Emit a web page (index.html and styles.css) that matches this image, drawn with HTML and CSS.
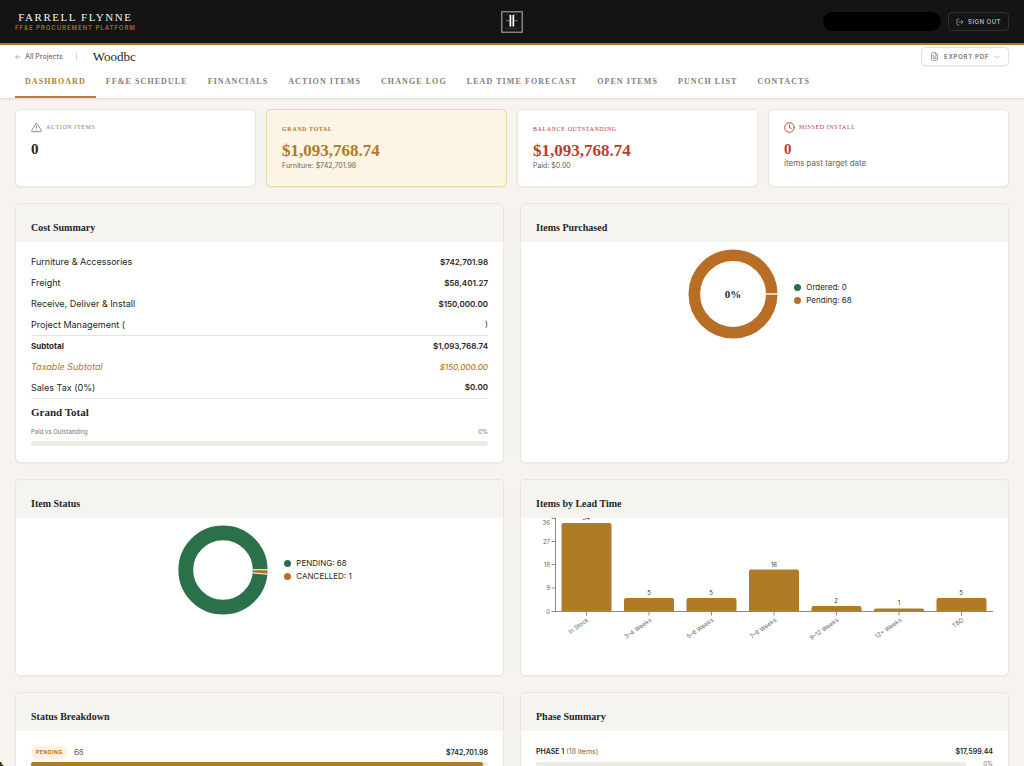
FILE: index.html
```html
<!DOCTYPE html>
<html lang="en">
<head>
<meta charset="utf-8">
<meta name="viewport" content="width=device-width, initial-scale=1">
<title>Farrell Flynne – FF&amp;E Procurement Platform</title>
<link rel="stylesheet" href="styles.css">
</head>
<body>
<header class="topbar">
  <div class="brand">
    <span class="brand-name">FARRELL FLYNNE</span>
    <span class="brand-sub">FF&amp;E PROCUREMENT PLATFORM</span>
  </div>
  <svg class="logo" viewBox="0 0 22 22" aria-label="Farrell Flynne logo" role="img">
    <rect x="0.75" y="0.75" width="20.5" height="20.5" fill="#141414" stroke="#8a8a8a" stroke-width="1.4"/>
    <path d="M5 3.6h12M4 17.8h14" stroke="#333" stroke-width="1"/>
    <path d="M5 9.7h12" stroke="#777" stroke-width="1"/>
    <rect x="8.500" y="4" width="5" height="11.5" fill="#555"/>
    <path d="M9.3 4v11.5M12.4 4v11.5" stroke="#fff" stroke-width="1.4"/>
  </svg>
  <div class="account">
    <span class="user-pill"></span>
    <button class="signout" type="button">
      <svg class="icon-xs" viewBox="0 0 24 24"><path d="M9 21H5a2 2 0 0 1-2-2V5a2 2 0 0 1 2-2h4M16 17l5-5-5-5M21 12H9"/></svg>
      SIGN OUT
    </button>
  </div>
</header>

<div class="subbar">
  <div class="crumbs">
    <a class="back" href="#"><svg class="icon-xxs" viewBox="0 0 24 24"><path d="M21 12H3M11 4l-8 8 8 8"/></svg>All Projects</a>
    <span class="divider"></span>
    <h1 class="project">Woodbc</h1>
    <button class="export" type="button">
      <svg class="icon-sm" viewBox="0 0 24 24"><path d="M14 2H6a2 2 0 0 0-2 2v16a2 2 0 0 0 2 2h12a2 2 0 0 0 2-2V8zM14 2v6h6M16 13H8M16 17H8M10 9H8"/></svg>
      EXPORT PDF
      <svg class="icon-xxs" viewBox="0 0 24 24"><path d="M3 8l9 9 9-9"/></svg>
    </button>
  </div>
  <nav class="tabs">
    <a class="tab active" href="#">DASHBOARD</a>
    <a class="tab" href="#">FF&amp;E SCHEDULE</a>
    <a class="tab" href="#">FINANCIALS</a>
    <a class="tab" href="#">ACTION ITEMS</a>
    <a class="tab" href="#">CHANGE LOG</a>
    <a class="tab" href="#">LEAD TIME FORECAST</a>
    <a class="tab" href="#">OPEN ITEMS</a>
    <a class="tab" href="#">PUNCH LIST</a>
    <a class="tab" href="#">CONTACTS</a>
  </nav>
</div>

<main class="main">
  <section class="stats">
    <article class="stat with-icon">
      <div class="stat-label"><svg class="icon-md" viewBox="0 0 24 24"><path d="M10.3 3.9L1.8 18a2 2 0 0 0 1.7 3h17a2 2 0 0 0 1.7-3L13.7 3.9a2 2 0 0 0-3.4 0zM12 9v4M12 17h.01"/></svg>ACTION ITEMS</div>
      <div class="stat-value">0</div>
    </article>
    <article class="stat gold">
      <div class="stat-label">GRAND TOTAL</div>
      <div class="stat-value">$1,093,768.74</div>
      <div class="stat-note">Furniture: $742,701.98</div>
    </article>
    <article class="stat red">
      <div class="stat-label">BALANCE OUTSTANDING</div>
      <div class="stat-value">$1,093,768.74</div>
      <div class="stat-note">Paid: $0.00</div>
    </article>
    <article class="stat red with-icon">
      <div class="stat-label"><svg class="icon-md" viewBox="0 0 24 24"><circle cx="12" cy="12" r="10.5"/><path d="M12 6v6l4 2"/></svg>MISSED INSTALL</div>
      <div class="stat-value">0</div>
      <div class="stat-note">items past target date</div>
    </article>
  </section>

  <div class="panels">
    <section class="panel">
      <h2 class="panel-title">Cost Summary</h2>
      <div class="panel-body">
        <table class="costs">
          <tbody>
          <tr><th scope="row">Furniture &amp; Accessories</th><td>$742,701.98</td></tr>
          <tr><th scope="row">Freight</th><td>$58,401.27</td></tr>
          <tr><th scope="row">Receive, Deliver &amp; Install</th><td>$150,000.00</td></tr>
          <tr><th scope="row">Project Management (</th><td class="plain">)</td></tr>
          <tr class="subtotal"><th scope="row">Subtotal</th><td>$1,093,768.74</td></tr>
          <tr class="taxable"><th scope="row">Taxable Subtotal</th><td>$150,000.00</td></tr>
          <tr><th scope="row">Sales Tax (0%)</th><td>$0.00</td></tr>
          <tr class="grand"><th scope="row">Grand Total</th><td></td></tr>
          </tbody>
        </table>
        <div class="paid"><span>Paid vs Outstanding</span><span>0%</span></div>
        <div class="track"></div>
      </div>
    </section>

    <section class="panel">
      <h2 class="panel-title">Items Purchased</h2>
      <div class="donut-row">
        <svg class="donut" viewBox="0 0 90 90" role="img" aria-label="0% purchased">
          <circle cx="45" cy="45" r="38.7" fill="none" stroke="#b86e25" stroke-width="11.600"/>
          <path d="M77 45h13" stroke="#fff" stroke-width="1.4"/>
          <text class="donut-text" x="45" y="49">0%</text>
        </svg>
        <ul class="legend">
          <li><i class="dot green"></i>Ordered: 0</li>
          <li><i class="dot orange"></i>Pending: 68</li>
        </ul>
      </div>
    </section>

    <section class="panel">
      <h2 class="panel-title">Item Status</h2>
      <div class="donut-row">
        <svg class="donut" viewBox="0 0 90 90" role="img" aria-label="68 pending, 1 cancelled">
          <circle cx="45" cy="45" r="37.2" fill="none" stroke="#2a7048" stroke-width="14.800"/>
          <path d="M74 44.7H90L90 49.3L74 47.8z" fill="#b86e25" stroke="#fff" stroke-width="1"/>
        </svg>
        <ul class="legend">
          <li><i class="dot green"></i>PENDING: 68</li>
          <li><i class="dot orange"></i>CANCELLED: 1</li>
        </ul>
      </div>
    </section>

    <section class="panel">
      <h2 class="panel-title">Items by Lead Time</h2>
      <svg class="bars" viewBox="0 0 487 157" role="img" aria-label="Items by lead time">
        <g class="fills">
          <path d="M40.500 93V7q0-2 2-2h46q2 0 2 2V93z"/>
          <path d="M103 93V82q0-2 2-2h46q2 0 2 2V93z"/>
          <path d="M165.500 93V82q0-2 2-2h46q2 0 2 2V93z"/>
          <path d="M228 93V53.500q0-2 2-2h46q2 0 2 2V93z"/>
          <path d="M290.500 93V90q0-2 2-2h46q2 0 2 2V93z"/>
          <path d="M353 93V92.500q0-2 2-2h46q2 0 2 2V93z"/>
          <path d="M415.500 93V82q0-2 2-2h46q2 0 2 2V93z"/>
        </g>
        <path class="axis" d="M34.500 0V93.500H472M30.500 .5h4M30.500 23.500h4M30.500 46.500h4M30.500 70h4M30.500 93.500h4M65.500 93.500v4M128 93.500v4M190.500 93.500v4M253 93.500v4M315.500 93.500v4M378 93.500v4M440.500 93.500v4"/>
        <g class="ylabels">
          <text x="29" y="7">36</text><text x="29" y="26">27</text><text x="29" y="49">18</text><text x="29" y="72">9</text><text x="29" y="96">0</text>
        </g>
        <g class="counts">
          <text x="65" y="2">34</text><text x="128" y="77">5</text><text x="190" y="77">5</text><text x="253" y="49">16</text><text x="315" y="85">2</text><text x="378" y="87">1</text><text x="440" y="77">5</text>
        </g>
        <g class="xlabels">
          <text transform="translate(68 103) rotate(-35)">In Stock</text>
          <text transform="translate(131 103) rotate(-35)">3–4 Weeks</text>
          <text transform="translate(193 103) rotate(-35)">5–6 Weeks</text>
          <text transform="translate(256 103) rotate(-35)">7–8 Weeks</text>
          <text transform="translate(318 103) rotate(-35)">9–12 Weeks</text>
          <text transform="translate(381 103) rotate(-35)">12+ Weeks</text>
          <text transform="translate(443 103) rotate(-35)">TBD</text>
        </g>
      </svg>
    </section>

    <section class="panel">
      <h2 class="panel-title">Status Breakdown</h2>
      <div class="breakdown">
        <div class="line"><span class="badge">PENDING</span><span class="qty">68</span><b class="amount">$742,701.98</b></div>
        <div class="track"><div class="fill" style="width:99%"></div></div>
      </div>
    </section>

    <section class="panel">
      <h2 class="panel-title">Phase Summary</h2>
      <div class="phases">
        <div class="line"><span><b>PHASE 1</b> <span class="qty">(18 items)</span></span><b class="amount">$17,599.44</b></div>
        <div class="progress"><div class="track"></div><span>0%</span></div>
      </div>
    </section>
  </div>
</main>
</body>
</html>
```
FILE: styles.css
```css
:root {
  --serif: "Liberation Serif", "Times New Roman", serif;
  --sans: Inter, "Open Sans", sans-serif;
  --gold: #b07a26;
  --orange: #b86e25;
  --green: #2a7048;
  --red: #bf3a32;
  --muted: #858079;
  --line: #e9e5e0;
  --ink: #262626;
}
* { box-sizing: border-box; }
html { scrollbar-width: none; }
body {
  margin: 0;
  background: #f7f3ee;
  color: var(--ink);
  font-family: var(--sans);
  font-size: 9px;
}
/* rounded window corner at the bottom left */
body::after {
  content: "";
  position: fixed;
  left: 0;
  bottom: 0;
  width: 6px;
  height: 4px;
  background: radial-gradient(circle at 100% 0, transparent 4px, #2c3d10 5px);
}
h1, h2, ul { margin: 0; padding: 0; }
a { color: inherit; text-decoration: none; }
button { font-family: inherit; cursor: pointer; }
svg { display: block; flex: none; }

.icon-xxs, .icon-xs, .icon-sm, .icon-md {
  fill: none;
  stroke: currentColor;
  stroke-width: 2;
  stroke-linecap: round;
  stroke-linejoin: round;
}
.icon-xxs { width: 6px; height: 6px; }
.icon-xs { width: 8px; height: 8px; }
.icon-sm { width: 9px; height: 9px; }
.icon-md { width: 11px; height: 11px; }

.topbar {
  display: grid;
  grid-template-columns: 1fr auto 1fr;
  align-items: center;
  height: 45px;
  padding: 0 15px;
  background: #141414;
  border-bottom: 2px solid #b8751c;
}
.brand {
  display: flex;
  flex-direction: column;
  align-items: center;
  justify-self: start;
}
.brand-name {
  color: #f2f2f2;
  font: 400 11px/12px var(--serif);
  letter-spacing: 0.14em;
}
.brand-sub {
  color: #a36c1c;
  font-size: 6px;
  font-weight: 600;
  line-height: 10px;
  letter-spacing: 0.16em;
}
.logo { width: 22px; height: 22px; }
.account { display: flex; align-items: center; justify-self: end; gap: 7px; }
.user-pill { width: 118px; height: 19px; border-radius: 10px; background: #000; }
.signout {
  display: flex;
  align-items: center;
  gap: 4px;
  height: 19px;
  padding: 0 7px;
  border: 1px solid #303030;
  border-radius: 4px;
  background: transparent;
  color: #b5b5b5;
  font-size: 6px;
  font-weight: 600;
  letter-spacing: 0.08em;
}

.subbar {
  padding: 2px 15px 0;
  background: #fff;
  border-bottom: 1px solid #e2dfda;
  box-shadow: 0 1px 2px rgba(0, 0, 0, .05);
}
.crumbs { display: flex; align-items: center; }
.back { display: flex; align-items: center; gap: 4px; color: #77726c; font-size: 7px; font-weight: 500; }
.divider { width: 1px; height: 7px; margin: 0 16px 0 13px; background: #d5d1cc; }
.project { font: 400 13px/16px var(--serif); }
.export {
  display: flex;
  align-items: center;
  gap: 5px;
  height: 19px;
  margin-left: auto;
  padding: 0 8px;
  border: 1px solid #e5e2de;
  border-radius: 4px;
  background: #fff;
  box-shadow: 0 1px 1px rgba(0, 0, 0, .05);
  color: var(--muted);
  font-size: 6px;
  font-weight: 700;
  letter-spacing: 0.12em;
}
.tabs { display: flex; }
.tab {
  padding: 10px 10px 8px;
  border-bottom: 2px solid transparent;
  color: var(--muted);
  font: 600 8px/12px var(--serif);
  letter-spacing: 0.135em;
  white-space: nowrap;
}
.tab.active { color: #b8802f; border-color: #b8802f; }

.main { padding: 10px 15px 16px; }
.stats { display: grid; grid-template-columns: repeat(4, 1fr); gap: 10px; margin-bottom: 16px; }
.stat {
  min-height: 78px;
  padding: 14px 15px 12px;
  background: #fff;
  border: 1px solid var(--line);
  border-radius: 5px;
  box-shadow: 0 1px 2px rgba(0, 0, 0, .04);
}
.stat.gold { background: #fcf4e4; border-color: #ecd7ae; }
.stat.with-icon { padding-top: 12px; }
.stat-label {
  display: flex;
  align-items: center;
  gap: 4px;
  color: var(--muted);
  font: 400 6px/11px var(--serif);
  letter-spacing: 0.1em;
}
.stat-value { margin-top: 6px; font: 700 17px/20px var(--serif); }
.with-icon .stat-value { font-size: 15px; }
.stat-note { color: #69645e; font-size: 7px; line-height: 9px; }
.with-icon .stat-note { font-size: 8px; }
.gold .stat-label, .gold .stat-value { color: var(--gold); }
.gold .stat-label { font-weight: 700; }
.red .stat-label, .red .stat-value { color: var(--red); }

.panels { display: grid; grid-template-columns: repeat(2, 1fr); gap: 16px; }
.panel {
  overflow: hidden;
  background: #fff;
  border: 1px solid var(--line);
  border-radius: 5px;
  box-shadow: 0 1px 2px rgba(0, 0, 0, .04);
}
.panel-title {
  padding: 16px 15px 6px;
  background: #f6f4f0;
  font: 600 10px/16px var(--serif);
}
.panel-body { padding: 9px 15px 16px; }

.costs { width: 100%; border-collapse: collapse; }
.costs tr { height: 21px; }
.costs th, .costs td { padding: 0; }
.costs th { text-align: left; font-size: 9px; font-weight: 400; }
.costs td { text-align: right; font-size: 8px; font-weight: 600; }
.costs .plain { font-weight: 400; }
.costs .subtotal, .costs .grand { border-top: 1px solid #e6e4e1; }
.costs .subtotal th { font-size: 8px; font-weight: 700; }
.costs .taxable { color: var(--gold); font-style: italic; }
.costs .taxable td { font-weight: 500; }
.costs .grand { height: 28px; }
.costs .grand th { font: 600 11px/16px var(--serif); }
.paid { display: flex; justify-content: space-between; color: #77726c; font-size: 6px; line-height: 12px; }
.track { height: 5px; margin-top: 3px; border-radius: 3px; background: #eeebe6; }
.fill { height: 100%; border-radius: 3px; background: var(--gold); }

.donut-row {
  display: flex;
  align-items: center;
  justify-content: center;
  gap: 16px;
  padding: 7px 0 60px 11px;
}
.donut { width: 90px; height: 90px; }
.donut-text { font: 600 11px var(--serif); text-anchor: middle; fill: var(--ink); }
.legend { list-style: none; font-size: 8px; line-height: 13px; }
.legend li { display: flex; align-items: center; gap: 5px; }
.dot { width: 7px; height: 7px; border-radius: 50%; }
.dot.green { background: var(--green); }
.dot.orange { background: var(--orange); }

.bars { width: 100%; font-family: var(--sans); font-size: 6px; }
.fills { fill: #b07a26; }
.axis { fill: none; stroke: #8a8a8a; stroke-width: 1; }
.ylabels, .xlabels { fill: #666; text-anchor: end; }
.counts { fill: #333; text-anchor: middle; }

.breakdown { padding: 15px 15px 16px; }
.phases { padding: 14px 15px 16px; }
.line { display: flex; align-items: center; font-size: 7px; line-height: 13px; }
.badge {
  margin-right: 6px;
  padding: 0 5px;
  border-radius: 7px;
  background: #fdf0dc;
  color: var(--orange);
  font-size: 5px;
  font-weight: 700;
  letter-spacing: 0.12em;
}
.qty { color: #69645e; }
.breakdown .qty { font-size: 8px; }
.amount { margin-left: auto; font-weight: 600; }
.phases b { font-weight: 600; }
.progress { display: flex; align-items: center; gap: 16px; color: #77726c; font-size: 6px; line-height: 12px; }
.progress .track { flex: 1; margin: 0; }
```
